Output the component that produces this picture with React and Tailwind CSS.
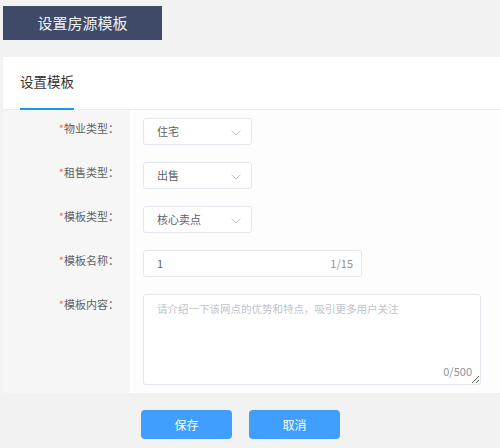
import React from "react";

const font = { fontFamily: '"Noto Sans CJK SC", "Noto Sans", sans-serif' };

function Chevron() {
  return (
    <svg width="10" height="6" viewBox="0 0 10 6" className="absolute right-[10px] top-[11px]">
      <path d="M0.5 0.5 L5 5 L9.5 0.5" fill="none" stroke="#c0c4cc" strokeWidth="1" />
    </svg>
  );
}

function Label({ children }) {
  return (
    <div className="w-[127px] shrink-0 pr-[11px] text-right text-[11px] leading-[20px] text-[#606266]">
      <span className="text-[#f56c6c]">*</span>
      {children}
    </div>
  );
}

function Select({ value }) {
  return (
    <div className="relative ml-[13px] h-[27px] w-[109px] rounded-[3px] border border-[#e4e7ed] bg-white pl-[13px] text-[11px] leading-[25px] text-[#606266]">
      {value}
      <Chevron />
    </div>
  );
}

export default function App() {
  return (
    <div className="h-[448px] w-[500px] overflow-hidden bg-[#f2f2f2]" style={font}>
      <div className="pl-[3px] pt-[6px]">
        <div className="flex h-[34px] w-[159px] items-center justify-center bg-[#3f4a68] text-[15px] text-[#eef1f6]">
          设置房源模板
        </div>
      </div>
      <div className="ml-[3px] mt-[17px] bg-white">
        <div className="h-[53px] border-b border-[#ebebeb] pl-[17px]">
          <div className="relative inline-block h-[53px] w-[54px] pt-[14px] text-[13.5px] leading-[20px] text-[#333]">
            设置模板
            <div className="absolute bottom-[-1px] left-0 h-[3px] w-[54px] bg-[#1a9be8]" />
          </div>
        </div>
        <div className="flex">
          <div className="w-[127px] bg-[#f6f6f6]" />
          <div className="flex-1 bg-[#fdfdfd]" />
        </div>
      </div>
      <div className="relative ml-[3px] h-[283px] bg-[#fdfdfd]">
        <div className="absolute inset-y-0 left-0 w-[127px] bg-[#f6f6f6]" />
        <div className="relative flex flex-col gap-[17px] pt-[8px]">
          <div className="flex">
            <Label>物业类型：</Label>
            <Select value="住宅" />
          </div>
          <div className="flex">
            <Label>租售类型：</Label>
            <Select value="出售" />
          </div>
          <div className="flex">
            <Label>模板类型：</Label>
            <Select value="核心卖点" />
          </div>
          <div className="flex">
            <Label>模板名称：</Label>
            <div className="ml-[13px] flex h-[27px] w-[219px] items-center justify-between rounded-[3px] border border-[#e4e7ed] bg-white pl-[13px] pr-[8px] text-[11px] text-[#606266]">
              <span>1</span>
              <span className="text-[#909399]">1/15</span>
            </div>
          </div>
          <div className="flex">
            <Label>模板内容：</Label>
            <div className="relative ml-[13px] h-[91px] w-[338px]">
              <textarea
                className="h-full w-full resize rounded-[3px] border border-[#e4e7ed] bg-white px-[13px] py-[4px] text-[10.5px] leading-[20px] text-[#606266] outline-none placeholder:text-[#c0c4cc]"
                style={font}
                placeholder="请介绍一下该网点的优势和特点，吸引更多用户关注"
              />
              <span className="absolute bottom-[7px] right-[9px] text-[11px] leading-[14px] text-[#909399]">0/500</span>
            </div>
          </div>
        </div>
      </div>
      <div className="flex gap-[17px] pl-[141px] pt-[17px]">
        <button className="h-[29px] w-[91px] rounded-[4px] bg-[#409eff] text-[12px] text-white" style={font}>保存</button>
        <button className="h-[29px] w-[91px] rounded-[4px] bg-[#409eff] text-[12px] text-white" style={font}>取消</button>
      </div>
    </div>
  );
}
